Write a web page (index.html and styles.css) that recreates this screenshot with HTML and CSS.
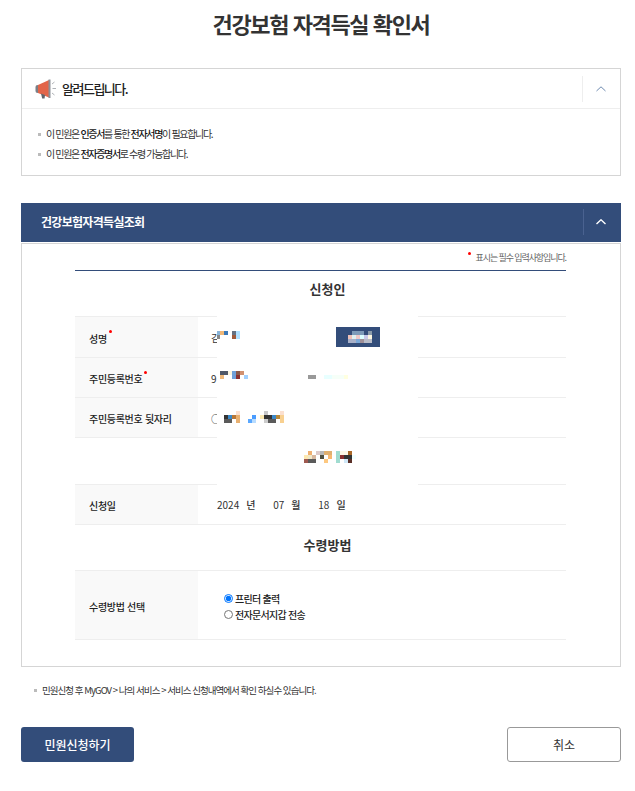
FILE: index.html
```html
<!DOCTYPE html>
<html lang="ko">
<head>
    <meta charset="UTF-8">
    <meta name="viewport" content="width=device-width, initial-scale=1.0">
    <title>건강보험 자격득실 확인서</title>
    <link rel="stylesheet" href="styles.css">
</head>
<body>
    <div class="page">
        <h1 class="page-title">건강보험 자격득실 확인서</h1>

        <section class="notice">
            <div class="notice-head">
                <svg class="notice-icon" viewBox="0 0 22 20" width="22" height="20">
                    <rect x="0.5" y="6" width="4" height="8" rx="2" fill="#7b7f86"/>
                    <path d="M3 6 L14 1 V18.5 L3 14 Z" fill="#e2654a"/>
                    <path d="M13.5 0.5 h2 v18.5 h-2 Z" fill="#8c9097"/>
                    <path d="M6 14.5 L10 16 L9.6 19.5 L7.2 19.5 Z" fill="#5f646c"/>
                    <path d="M17 5 L19.5 3 M17.5 9.5 H21 M17 14 L19.5 16" stroke="#9a9ea5" stroke-width="0.8" fill="none"/>
                </svg>
                <span class="notice-title">알려드립니다.</span>
                <span class="toggle">
                    <svg viewBox="0 0 10 6" width="10" height="6"><path d="M0.5 5 L5 0.8 L9.5 5" fill="none" stroke="#6f8bb0" stroke-width="1"/></svg>
                </span>
            </div>
            <ul class="notice-list">
                <li>이 민원은 <b>인증서</b>를 통한 <b>전자서명</b>이 필요합니다.</li>
                <li>이 민원은 <b>전자증명서</b>로 수령 가능합니다.</li>
            </ul>
        </section>

        <div class="section-bar">
            <span class="section-title">건강보험자격득실조회</span>
            <span class="toggle toggle-dark">
                <svg viewBox="0 0 10 6" width="10" height="6"><path d="M0.5 5 L5 0.8 L9.5 5" fill="none" stroke="#fff" stroke-width="1.4"/></svg>
            </span>
        </div>

        <section class="panel">
            <p class="required-note"><span class="req req-note"></span>표시는 필수 입력사항입니다.</p>
            <div class="form">
                <h2 class="form-heading form-heading-first">신청인</h2>
                <div class="row row-name">
                    <div class="row-label">성명<span class="req"></span></div>
                    <div class="row-value">김</div>
                </div>
                <div class="row">
                    <div class="row-label">주민등록번호<span class="req"></span></div>
                    <div class="row-value">9</div>
                </div>
                <div class="row">
                    <div class="row-label">주민등록번호 뒷자리</div>
                    <div class="row-value">○</div>
                </div>
                <div class="form-heading form-heading-blank"></div>
                <div class="row">
                    <div class="row-label">신청일</div>
                    <div class="row-value date">
                        <span class="date-num">2024</span><span class="date-unit">년</span>
                        <span class="date-num">07</span><span class="date-unit">월</span>
                        <span class="date-num">18</span><span class="date-unit">일</span>
                    </div>
                </div>
                <h2 class="form-heading form-heading-recv">수령방법</h2>
                <div class="row row-recv">
                    <div class="row-label">수령방법 선택</div>
                    <div class="row-value radios">
                        <label class="radio"><input type="radio" name="recv" checked>프린터 출력</label>
                        <label class="radio"><input type="radio" name="recv">전자문서지갑 전송</label>
                    </div>
                </div>

                <!-- 개인정보 가림 영역 -->
                <svg class="mask" viewBox="75 270 491 220" width="491" height="220" shape-rendering="crispEdges">
                    <rect x="217" y="316" width="201" height="169" fill="#fff"/>
                    <rect x="336" y="327" width="44" height="20" fill="#334d7a"/>
                    <g>
                        <rect x="352" y="331" width="12" height="4" fill="#7d9ab8"/>
                        <rect x="368" y="331" width="4" height="4" fill="#8a9aaa"/>
                        <rect x="348" y="335" width="4" height="4" fill="#eec0b8"/>
                        <rect x="352" y="335" width="4" height="4" fill="#e0f0f0"/>
                        <rect x="356" y="335" width="4" height="4" fill="#eec8c8"/>
                        <rect x="360" y="335" width="4" height="4" fill="#ddffff"/>
                        <rect x="364" y="335" width="4" height="4" fill="#c8c8e8"/>
                        <rect x="368" y="335" width="4" height="4" fill="#fdf6e0"/>
                        <rect x="348" y="339" width="8" height="4" fill="#a8b0c8"/>
                        <rect x="356" y="339" width="4" height="4" fill="#7aa8d8"/>
                        <rect x="360" y="339" width="4" height="4" fill="#a09098"/>
                        <rect x="364" y="339" width="8" height="4" fill="#b8bcc8"/>
                    </g>
                    <g>
                        <rect x="217" y="331" width="3" height="4" fill="#8ab4d8"/>
                        <rect x="220" y="331" width="4" height="4" fill="#f0b878"/>
                        <rect x="224" y="331" width="4" height="4" fill="#3a78b8"/>
                        <rect x="232" y="331" width="4" height="4" fill="#667080"/>
                        <rect x="236" y="331" width="4" height="8" fill="#b0e0ff"/>
                        <rect x="217" y="335" width="3" height="4" fill="#888888"/>
                        <rect x="232" y="335" width="4" height="4" fill="#a05a3a"/>
                    </g>
                    <g>
                        <rect x="220" y="371" width="8" height="4" fill="#505868"/>
                        <rect x="228" y="371" width="4" height="4" fill="#fdf6e0"/>
                        <rect x="232" y="371" width="4" height="8" fill="#6ea0d8"/>
                        <rect x="236" y="371" width="4" height="4" fill="#8a5a4a"/>
                        <rect x="240" y="371" width="4" height="4" fill="#d09070"/>
                        <rect x="220" y="375" width="4" height="4" fill="#f0b878"/>
                        <rect x="236" y="375" width="4" height="4" fill="#8a3030"/>
                        <rect x="244" y="375" width="4" height="4" fill="#a0d0ff"/>
                        <rect x="308" y="375" width="8" height="4" fill="#999999"/>
                        <rect x="324" y="375" width="8" height="4" fill="#e8ffff"/>
                        <rect x="332" y="375" width="12" height="4" fill="#f6fff8"/>
                        <rect x="344" y="375" width="4" height="4" fill="#ffffe0"/>
                    </g>
                    <g>
                        <rect x="236" y="411" width="4" height="4" fill="#fbe0d0"/>
                        <rect x="264" y="411" width="4" height="4" fill="#c8c8c8"/>
                        <rect x="280" y="411" width="4" height="4" fill="#fbe0d0"/>
                        <rect x="224" y="415" width="4" height="4" fill="#333333"/>
                        <rect x="228" y="415" width="4" height="4" fill="#3a88c8"/>
                        <rect x="232" y="415" width="4" height="4" fill="#b87838"/>
                        <rect x="236" y="415" width="4" height="8" fill="#e8b070"/>
                        <rect x="252" y="415" width="4" height="4" fill="#4a9cff"/>
                        <rect x="260" y="415" width="4" height="4" fill="#fbe8b0"/>
                        <rect x="264" y="415" width="8" height="4" fill="#333333"/>
                        <rect x="272" y="415" width="4" height="4" fill="#3a88c8"/>
                        <rect x="276" y="415" width="4" height="4" fill="#b88838"/>
                        <rect x="280" y="415" width="4" height="8" fill="#f8d090"/>
                        <rect x="224" y="419" width="8" height="4" fill="#5a5a5a"/>
                        <rect x="248" y="419" width="4" height="4" fill="#5aa8ff"/>
                        <rect x="252" y="419" width="4" height="4" fill="#b8dcff"/>
                        <rect x="264" y="419" width="4" height="4" fill="#cccccc"/>
                        <rect x="268" y="419" width="8" height="4" fill="#5a5a5a"/>
                    </g>
                    <g>
                        <rect x="308" y="451" width="4" height="4" fill="#f0b070"/>
                        <rect x="316" y="451" width="4" height="4" fill="#dccaca"/>
                        <rect x="320" y="451" width="4" height="4" fill="#b8b8b8"/>
                        <rect x="324" y="451" width="8" height="4" fill="#e0b070"/>
                        <rect x="336" y="451" width="4" height="12" fill="#a0dcd0"/>
                        <rect x="340" y="451" width="8" height="4" fill="#fdf8e8"/>
                        <rect x="348" y="451" width="4" height="4" fill="#a86828"/>
                        <rect x="304" y="455" width="4" height="4" fill="#fde8b0"/>
                        <rect x="308" y="455" width="4" height="4" fill="#f0e8c8"/>
                        <rect x="312" y="455" width="4" height="4" fill="#d8b8a0"/>
                        <rect x="320" y="455" width="4" height="4" fill="#505040"/>
                        <rect x="328" y="455" width="4" height="4" fill="#f8b870"/>
                        <rect x="340" y="455" width="4" height="4" fill="#8a3030"/>
                        <rect x="344" y="455" width="8" height="4" fill="#333333"/>
                        <rect x="352" y="455" width="4" height="4" fill="#f0ffff"/>
                        <rect x="304" y="459" width="4" height="4" fill="#a05a50"/>
                        <rect x="308" y="459" width="8" height="4" fill="#5a5a5a"/>
                        <rect x="324" y="459" width="4" height="4" fill="#fdc880"/>
                        <rect x="344" y="459" width="4" height="4" fill="#d0e8f8"/>
                        <rect x="348" y="459" width="4" height="4" fill="#5a3028"/>
                    </g>
                </svg>
            </div>
        </section>

        <p class="foot-note">민원신청 후 MyGOV &gt; 나의 서비스 &gt; 서비스 신청내역에서 확인 하실수 있습니다.</p>

        <div class="actions">
            <button class="btn btn-primary">민원신청하기</button>
            <button class="btn btn-cancel">취소</button>
        </div>
    </div>
</body>
</html>
```

FILE: styles.css
```css
html, body {
    margin: 0;
    padding: 0;
    background: #fff;
    color: #222;
    font-family: "Noto Sans CJK KR", "Noto Sans", sans-serif;
}
.page {
    padding: 0 14px 0 21px;
}
.page-title {
    margin: 0;
    height: 68px;
    padding-top: 5px;
    box-sizing: border-box;
    line-height: 36px;
    font-size: 22px;
    font-weight: 700;
    letter-spacing: -1.4px;
    text-align: center;
    color: #333;
}

/* 알림 박스 */
.notice {
    height: 108px;
    box-sizing: border-box;
    border: 1px solid #d5d5d5;
}
.notice-head {
    display: flex;
    align-items: center;
    height: 40px;
    box-sizing: border-box;
    padding-left: 13px;
    border-bottom: 1px solid #eee;
}
.notice-icon {
    flex: none;
}
.notice-title {
    margin-left: 5px;
    font-size: 13px;
    font-weight: 500;
    letter-spacing: -1.5px;
}
.toggle {
    display: flex;
    align-items: center;
    justify-content: center;
    width: 35px;
    height: 26px;
    margin-left: auto;
    padding-right: 2px;
    border-left: 1px solid #eee;
}
.notice-list {
    margin: 0;
    padding: 15px 0 0 16px;
    list-style: none;
    font-size: 10px;
    color: #333;
}
.notice-list li {
    line-height: 20px;
    letter-spacing: -1.33px;
}
.notice-list li::before,
.foot-note::before {
    content: "";
    display: inline-block;
    width: 3px;
    height: 3px;
    margin-right: 5px;
    vertical-align: 2px;
    background: #bbb;
}
.notice-list b {
    font-weight: 500;
    color: #111;
}

/* 조회 영역 */
.section-bar {
    display: flex;
    align-items: center;
    height: 39px;
    margin-top: 27px;
    padding-left: 20px;
    padding-bottom: 2px;
    box-sizing: border-box;
    background: #334d7a;
}
.section-title {
    font-size: 12px;
    font-weight: 700;
    letter-spacing: -0.7px;
    color: #fff;
}
.toggle-dark {
    width: 34px;
    padding-right: 3px;
    border-left-color: #4a6290;
}
.panel {
    margin-top: 1px;
    padding: 0 54px 26px 53px;
    border: 1px solid #d5d5d5;
}
.required-note {
    margin: 0;
    height: 26px;
    line-height: 27px;
    font-size: 9px;
    letter-spacing: -1.1px;
    text-align: right;
    color: #666;
}
.req {
    flex: none;
    align-self: flex-start;
    width: 3px;
    height: 3px;
    margin: 11px 0 0 2px;
    border-radius: 50%;
    background: #f00;
}
.req-note {
    display: inline-block;
    margin: 0 5px 0 0;
    vertical-align: 6px;
}
.form {
    position: relative;
    border-top: 1px solid #334d7a;
}
.form-heading {
    margin: 0;
    padding-left: 14px;
    font-size: 13px;
    font-weight: 700;
    text-align: center;
    color: #333;
}
.form-heading-first {
    height: 45px;
    line-height: 35px;
}
.form-heading-blank {
    height: 47px;
    border-top: 1px solid #eee;
    box-sizing: border-box;
}
.form-heading-recv {
    height: 46px;
    box-sizing: border-box;
    border-top: 1px solid #eee;
    line-height: 40px;
}
.row {
    display: grid;
    grid-template-columns: 123px 1fr;
    height: 40px;
    box-sizing: border-box;
    border-top: 1px solid #eee;
}
.row-name {
    height: 41px;
}
.row-recv {
    height: 70px;
    border-bottom: 1px solid #eee;
}
.row-label {
    display: flex;
    align-items: center;
    padding: 2px 0 0 14px;
    font-size: 10px;
    font-weight: 500;
    letter-spacing: -0.3px;
    background: #f9f9f9;
    color: #222;
}
.row-value {
    display: flex;
    align-items: center;
    padding: 1px 0 0 13px;
    font-size: 10px;
    color: #333;
}
.date {
    padding: 0 0 0 19px;
}
.date-num {
    margin-right: 7px;
}
.date-unit {
    width: 27px;
    font-weight: 500;
}
.radios {
    flex-direction: column;
    align-items: flex-start;
    justify-content: center;
    padding: 2px 0 0 26px;
}
.radio {
    display: flex;
    align-items: center;
    height: 16px;
    font-size: 10px;
    font-weight: 500;
    letter-spacing: -0.7px;
    color: #222;
}
.radio input {
    width: 9px;
    height: 9px;
    margin: 0 2px 0 0;
}
.mask {
    position: absolute;
    left: 0;
    top: -1px;
}

/* 하단 */
.foot-note {
    margin: 15px 0 0 13px;
    line-height: 16px;
    font-size: 9.5px;
    letter-spacing: -0.96px;
    color: #333;
}
.actions {
    display: flex;
    justify-content: space-between;
    margin-top: 29px;
}
.btn {
    width: 114px;
    height: 35px;
    padding: 0;
    border-radius: 3px;
    font-family: inherit;
    font-size: 12px;
}
.btn-primary {
    width: 113px;
    border: none;
    font-weight: 500;
    background: #334d7a;
    color: #fff;
}
.btn-cancel {
    border: 1px solid #999;
    background: #fff;
    color: #333;
}
```
